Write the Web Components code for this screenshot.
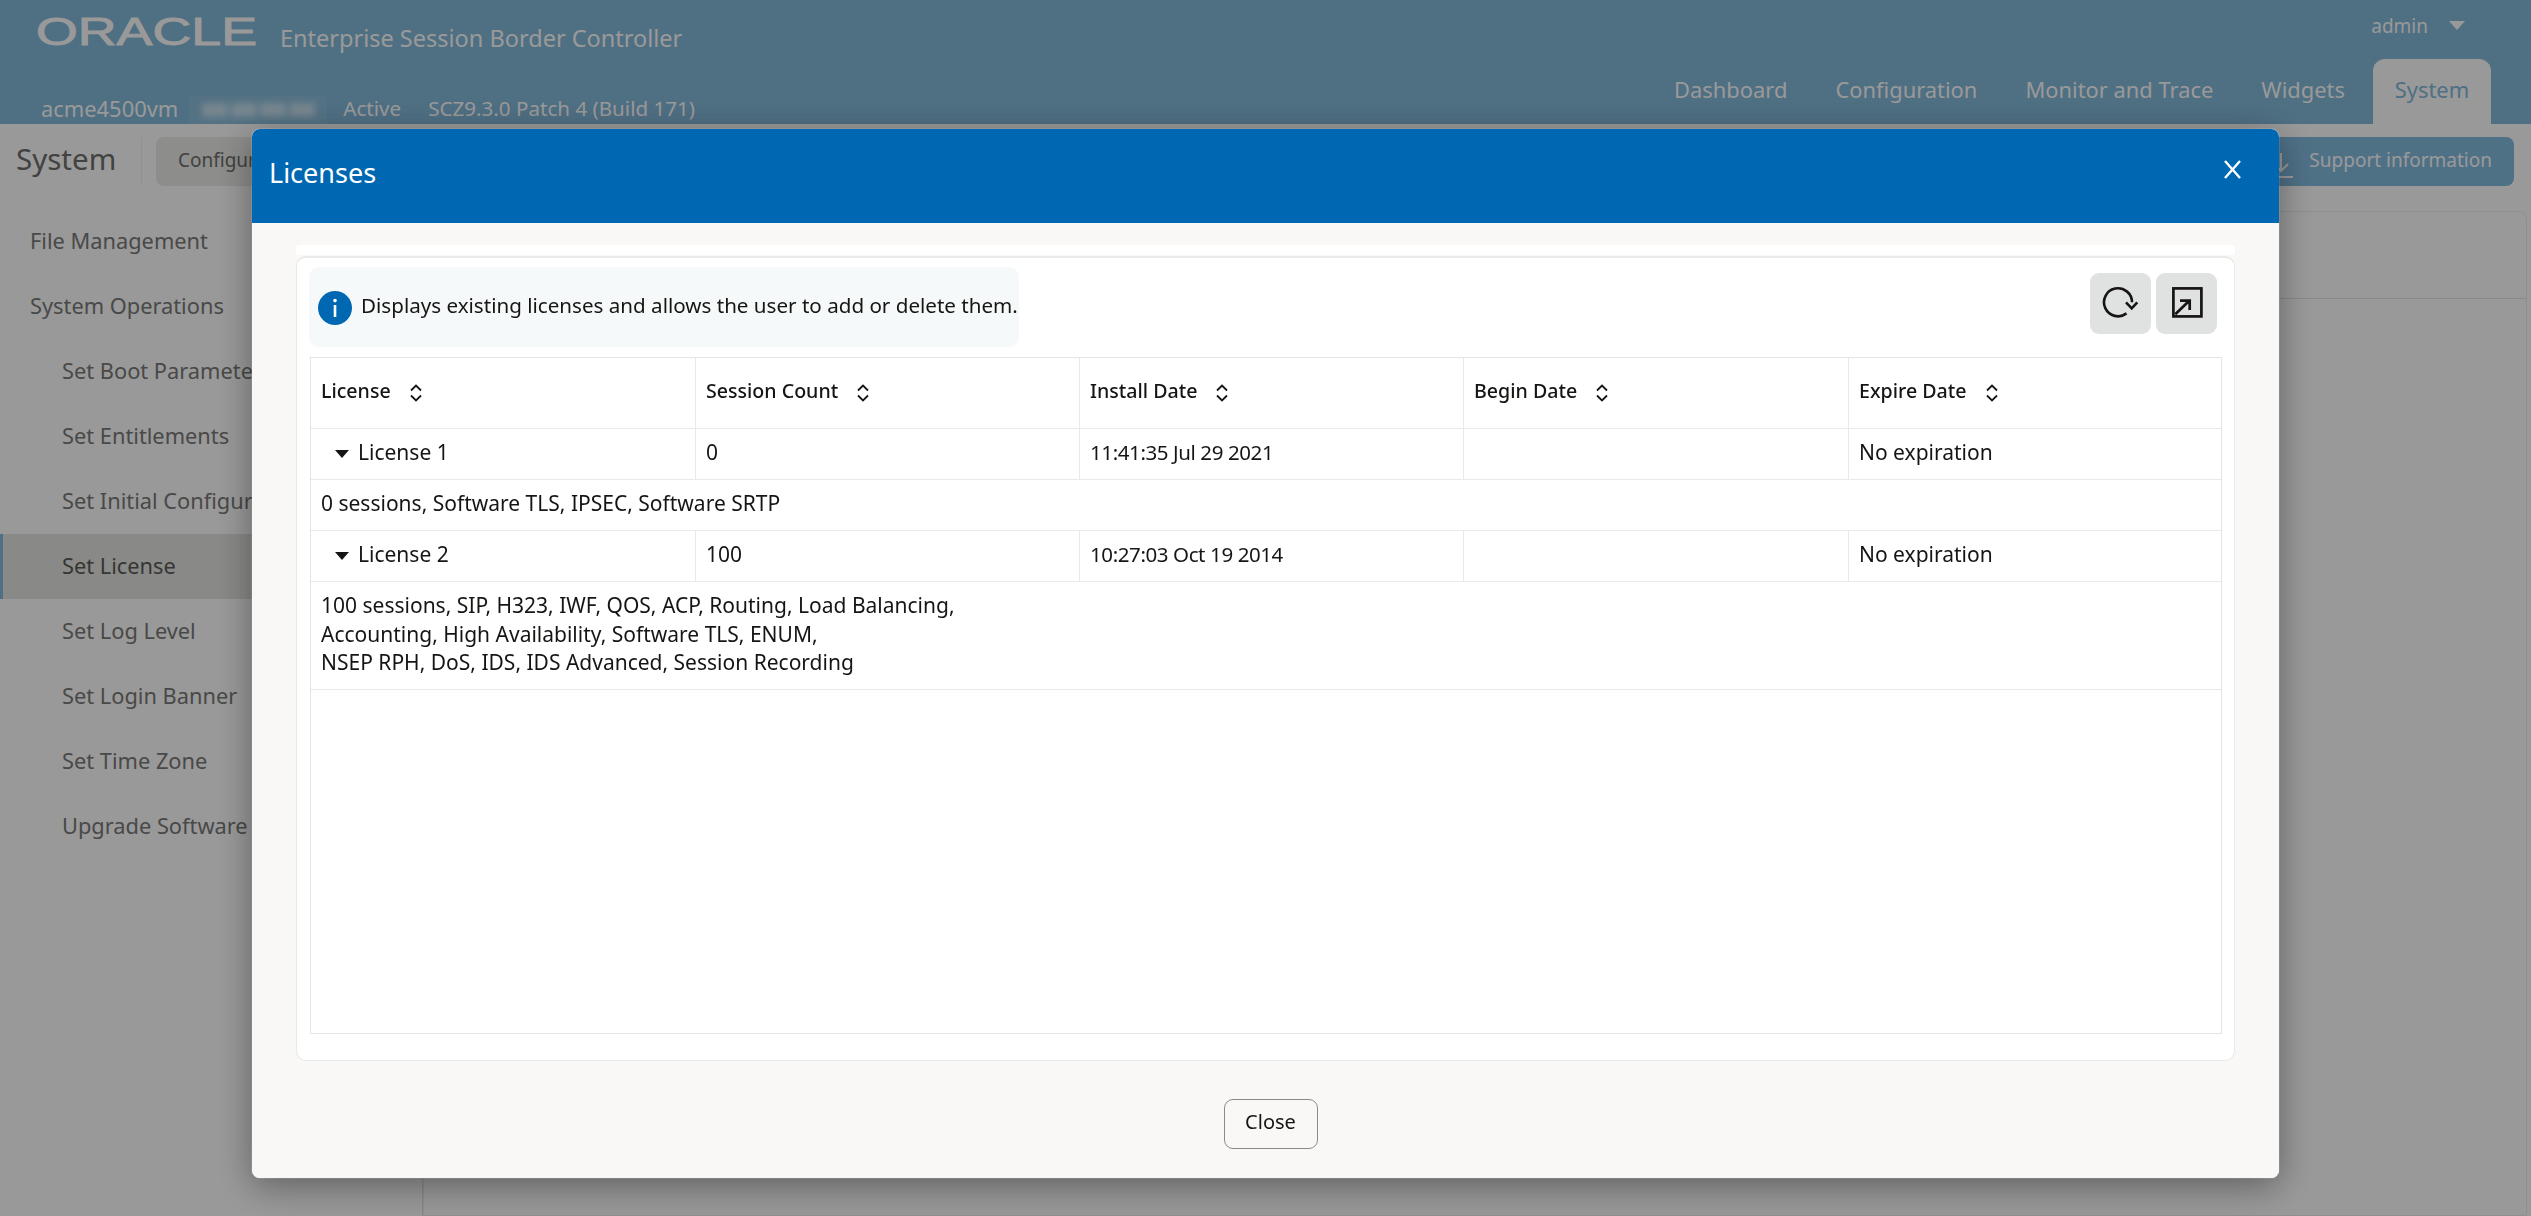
<!DOCTYPE html>
<html>
<head>
<meta charset="utf-8">
<title>Licenses</title>
<style>
  html, body { margin: 0; height: 100%; overflow: hidden; background: #fff; font-family: "Noto Sans", "Open Sans", sans-serif; }
</style>
</head>
<body>
<esbc-header></esbc-header>
<esbc-toolbar></esbc-toolbar>
<esbc-workspace></esbc-workspace>
<esbc-dialog>
  <span slot="title">Licenses</span>
  <license-panel></license-panel>
  <outline-button slot="footer">Close</outline-button>
</esbc-dialog>

<script>
// page header with logo, device info and main tabs
class EsbcHeader extends HTMLElement {
    constructor() {
        super();
        this.attachShadow({mode: "open"});
        this.shadowRoot.innerHTML = `
            <style>
                :host { display: flex; justify-content: space-between; height: 124px; background: #84b9da; color: #fff; font-size: 21.9px; }
                .left { padding: 16px 0 0 36px; display: flex; flex-direction: column; }
                .brand { display: flex; gap: 23px; height: 80px; }
                .brand svg { display: block; width: 221px; height: 32px; overflow: visible; }
                .brand svg text { font: 400 38px "Liberation Sans", sans-serif; fill: #fff; stroke: #fff; stroke-width: .9px; }
                .product { font-size: 23.5px; line-height: 44px; }
                .device { display: flex; align-items: center; height: 28px; margin-left: 5px; padding-bottom: 4px; box-sizing: border-box; }
                .ip { display: flex; gap: 3px; justify-content: center; align-items: center; width: 138px; height: 28px; margin: 4px 16px 0 11px; background: #8bbedc; }
                .ip i { display: block; width: 26px; height: 14px; background: #fff; opacity: .5; filter: blur(3px); }
                .active, .version { font-size: 20.6px; }
                .version { margin-left: 27px; }
                .right { display: flex; flex-direction: column; align-items: flex-end; padding-right: 40px; }
                .user { display: flex; align-items: center; gap: 21px; height: 59px; padding: 0 26px 8px 0; box-sizing: border-box; font-size: 19px; }
                .user b { width: 0; height: 0; border: 8px solid transparent; border-top: 9px solid #fff; border-bottom: 0; }
                nav { display: flex; height: 65px; align-items: stretch; }
                nav a { display: flex; align-items: center; padding: 0 24px 5px; box-sizing: border-box; }
                nav a.on { background: #fff; color: #84b9da; border-radius: 12px 12px 0 0; width: 118px; padding: 0 0 5px; justify-content: center; margin-left: 4px; }
            </style>
            <div class="left">
                <div class="brand">
                    <svg viewBox="0 0 221 32"><text x="0" y="29" textLength="221" lengthAdjust="spacingAndGlyphs">ORACLE</text></svg>
                    <span class="product">Enterprise Session Border Controller</span>
                </div>
                <div class="device">
                    <span>acme4500vm</span>
                    <span class="ip"><i></i><i></i><i></i><i></i></span>
                    <span class="active">Active</span>
                    <span class="version">SCZ9.3.0 Patch 4 (Build 171)</span>
                </div>
            </div>
            <div class="right">
                <div class="user"><span>admin</span><b></b></div>
                <nav>
                    <a>Dashboard</a><a>Configuration</a><a>Monitor and Trace</a><a>Widgets</a><a class="on">System</a>
                </nav>
            </div>
        `;
    }
}
customElements.define('esbc-header', EsbcHeader);

// row under the header, "System" title and page actions
class EsbcToolbar extends HTMLElement {
    constructor() {
        super();
        this.attachShadow({mode: "open"});
        this.shadowRoot.innerHTML = `
            <style>
                :host { display: flex; align-items: center; height: 49px; margin-top: 13px; padding: 0 17px 0 16px; color: #6e6e6c; font-size: 19px; }
                h1 { margin: 0; font-size: 29.5px; font-weight: 400; width: 125px; border-right: 1px solid #f0f0f0; height: 49px; line-height: 43px; }
                .btn { display: flex; align-items: center; height: 49px; box-sizing: border-box; border-radius: 8px; padding: 0 22px 4px; background: #ebebe9; margin-left: 14px; white-space: nowrap; }
                .spacer { flex: 1; }
                .support { background: #84bce0; color: #fff; margin: 0; gap: 15px; }
                .support svg { width: 24px; height: 26px; margin-top: 10px; }
            </style>
            <h1>System</h1>
            <div class="btn">Configure</div>
            <div class="spacer"></div>
            <div class="btn support">
                <svg viewBox="0 0 24 26" fill="none" stroke="#fff" stroke-width="2"><path d="M11 1v18M4 12l7 7 7-7M1 25h22"/></svg>
                <span>Support information</span>
            </div>
        `;
    }
}
customElements.define('esbc-toolbar', EsbcToolbar);

// sidebar entry, nested and active are set by attribute
class NavItem extends HTMLElement {
    constructor() {
        super();
        this.attachShadow({mode: "open"});
        this.shadowRoot.innerHTML = `
            <style>
                :host { display: flex; align-items: center; height: 65px; padding: 0 0 3px 30px; box-sizing: border-box; color: #7a7a78; font-size: 21.8px; white-space: nowrap; }
                :host([nested]) { padding-left: 62px; }
                :host([active]) { padding-left: 59px; border-left: 3px solid #84b9da; background: #e4e4e2; color: #5a5a58; }
            </style>
            <slot></slot>
        `;
    }
}
customElements.define('nav-item', NavItem);

// everything below the toolbar, behind the dialog
class EsbcWorkspace extends HTMLElement {
    constructor() {
        super();
        this.attachShadow({mode: "open"});
        this.shadowRoot.innerHTML = `
            <style>
                :host { display: flex; height: 1030px; }
                .side { width: 423px; box-sizing: border-box; padding-top: 23px; border-right: 1px solid #e4e4e2; }
                .main { flex: 1; padding: 25px 4px 0 0; }
                .panel { height: 100%; box-sizing: border-box; border: 1px solid #efefed; border-radius: 8px 8px 0 0; }
                .line { height: 86px; border-bottom: 1px solid #e4e4e2; }
            </style>
            <div class="side">
                <nav-item>File Management</nav-item>
                <nav-item>System Operations</nav-item>
                <nav-item nested>Set Boot Parameters</nav-item>
                <nav-item nested>Set Entitlements</nav-item>
                <nav-item nested>Set Initial Configuration</nav-item>
                <nav-item nested active>Set License</nav-item>
                <nav-item nested>Set Log Level</nav-item>
                <nav-item nested>Set Login Banner</nav-item>
                <nav-item nested>Set Time Zone</nav-item>
                <nav-item nested>Upgrade Software</nav-item>
            </div>
            <div class="main"><div class="panel"><div class="line"></div></div></div>
        `;
    }
}
customElements.define('esbc-workspace', EsbcWorkspace);

// modal with backdrop, title bar, body and footer
class EsbcDialog extends HTMLElement {
    constructor() {
        super();
        this.attachShadow({mode: "open"});
        this.shadowRoot.innerHTML = `
            <style>
                :host { position: fixed; inset: 0; display: block; background: rgba(0,0,0,.4); }
                .box { position: absolute; left: 252px; top: 129px; width: 2027px; height: 1049px; display: flex; flex-direction: column; border-radius: 8px; overflow: hidden; background: #f9f8f6; box-shadow: 0 0 1px #fff; }
                .shadow { position: absolute; left: 252px; top: 129px; width: 2027px; height: 1049px; border-radius: 8px; box-shadow: 0 8px 36px rgba(0,0,0,.38); }
                .head { display: flex; align-items: center; justify-content: space-between; height: 94px; flex: none; padding: 0 37px 8px 17px; box-sizing: border-box; background: #0067b2; color: #fff; font-size: 27px; }
                .head svg { width: 19px; height: 19px; display: block; margin-bottom: 6px; }
                .body { height: 827px; flex: none; padding: 22px 44px 0; box-sizing: border-box; }
                .foot { flex: 1; display: flex; justify-content: center; padding: 49px 0 0 10px; box-sizing: border-box; }
            </style>
            <div class="shadow"></div>
            <div class="box">
                <div class="head">
                    <slot name="title"></slot>
                    <svg viewBox="0 0 19 19" fill="none" stroke="#fff" stroke-width="2.4"><path d="M2 1l15 17M17 1L2 18"/></svg>
                </div>
                <div class="body"><slot></slot></div>
                <div class="foot"><slot name="footer"></slot></div>
            </div>
        `;
    }
}
customElements.define('esbc-dialog', EsbcDialog);

class OutlineButton extends HTMLElement {
    constructor() {
        super();
        this.attachShadow({mode: "open"});
        this.shadowRoot.innerHTML = `
            <style>
                :host { display: flex; align-items: center; justify-content: center; width: 94px; height: 50px; box-sizing: border-box; padding-bottom: 5px; border: 1px solid #8a8a88; border-radius: 9px; color: #161513; font-size: 20px; }
            </style>
            <slot></slot>
        `;
    }
}
customElements.define('outline-button', OutlineButton);

// square grey toolbar button, icon goes in the slot
class IconButton extends HTMLElement {
    constructor() {
        super();
        this.attachShadow({mode: "open"});
        this.shadowRoot.innerHTML = `
            <style>
                :host { display: flex; align-items: center; justify-content: center; width: 61px; height: 61px; border-radius: 9px; background: #e0e2e2; }
            </style>
            <slot></slot>
        `;
    }
}
customElements.define('icon-button', IconButton);

// white card with the info note, the two actions and the table
class LicensePanel extends HTMLElement {
    constructor() {
        super();
        this.attachShadow({mode: "open"});
        this.shadowRoot.innerHTML = `
            <style>
                :host { display: block; color: #161513; font-size: 20.6px; }
                .strip { height: 10px; background: #fff; border-radius: 4px 4px 0 0; }
                .card { height: 805px; margin-top: 1px; box-sizing: border-box; padding: 9px 12px 0 12px; background: #fff; border: 1px solid #e9e9e7; border-top-width: 2px; border-radius: 10px; }
                .top { display: flex; justify-content: space-between; height: 90px; }
                .info { display: flex; align-items: center; gap: 9px; width: 710px; height: 80px; box-sizing: border-box; padding: 0 0 5px 9px; background: #f6f9fa; border-radius: 10px; white-space: nowrap; }
                .info svg { width: 34px; height: 34px; margin-top: 7px; flex: none; }
                .actions { display: flex; gap: 5px; padding: 6px 5px 0 0; }
                icon-button svg { width: 40px; height: 40px; display: block; }
                license-table { margin-left: 1px; }
            </style>
            <div class="strip"></div>
            <div class="card">
                <div class="top">
                    <div class="info">
                        <svg viewBox="0 0 34 34"><circle cx="17" cy="17" r="17" fill="#0067b2"/><rect x="15.7" y="14" width="2.6" height="12" fill="#fff"/><circle cx="17" cy="9.6" r="1.8" fill="#fff"/></svg>
                        <span>Displays existing licenses and allows the user to add or delete them.</span>
                    </div>
                    <div class="actions">
                        <icon-button>
                            <svg viewBox="0 0 40 40" fill="none" stroke="#161513" stroke-width="2.6"><path d="M31 18.3A14 14 0 1 0 25.5 29.4"/><path d="M25 18.3l5.7 6 5.6-6"/></svg>
                        </icon-button>
                        <icon-button>
                            <svg viewBox="0 0 40 40" fill="none" stroke="#161513" stroke-width="2.7"><rect x="6.4" y="4.4" width="28" height="28"/><path d="M8.3 30.3L22 17M13 16.7h9.7V26"/></svg>
                        </icon-button>
                    </div>
                </div>
                <license-table></license-table>
            </div>
        `;
    }
}
customElements.define('license-panel', LicensePanel);

class LicenseTable extends HTMLElement {
    constructor() {
        super();
        this._columns = ["License", "Session Count", "Install Date", "Begin Date", "Expire Date"];
        this._rows = [
            { cells: ["License 1", "0", "11:41:35 Jul 29 2021", "", "No expiration"],
              detail: ["0 sessions, Software TLS, IPSEC, Software SRTP"] },
            { cells: ["License 2", "100", "10:27:03 Oct 19 2014", "", "No expiration"],
              detail: ["100 sessions, SIP, H323, IWF, QOS, ACP, Routing, Load Balancing,",
                       "Accounting, High Availability, Software TLS, ENUM,",
                       "NSEP RPH, DoS, IDS, IDS Advanced, Session Recording"] }
        ];
        this.attachShadow({mode: "open"});
        const sortIcon = `<svg class="sort" viewBox="0 0 14 18" fill="none" stroke="#161513" stroke-width="1.8"><path d="M2 6.5l5-5 5 5M2 11.5l5 5 5-5"/></svg>`;
        const head = this._columns.map(c => `<div class="th">${c}${sortIcon}</div>`).join("");
        const rows = this._rows.map(r => {
            const cells = r.cells.map((c, i) => {
                if (i == 0) return `<div class="td first"><b></b>${c}</div>`;
                if (i == 2) return `<div class="td date">${c}</div>`;
                return `<div class="td">${c}</div>`;
            }).join("");
            return cells + `<div class="detail">${r.detail.join("<br>")}</div>`;
        }).join("");
        this.shadowRoot.innerHTML = `
            <style>
                :host { display: block; height: 677px; box-sizing: border-box; border: 1px solid #e4e4e2; }
                .grid { display: grid; grid-template-columns: 384px 384px 384px 385px 1fr; font-size: 21px; }
                .th, .td { display: flex; align-items: center; padding-left: 10px; border-left: 1px solid #e9e9e7; border-bottom: 1px solid #e9e9e7; box-sizing: border-box; }
                .th:nth-child(1), .td.first { border-left: 0; }
                .th { height: 71px; font-size: 19.6px; font-weight: 500; padding-bottom: 5px; }
                .td { height: 51px; padding-bottom: 5px; }
                .date { font-size: 20.5px; letter-spacing: -.4px; }
                .first { padding-left: 24px; }
                .first b { width: 0; height: 0; margin-right: 9px; margin-top: 5px; border: 7.5px solid transparent; border-top: 8px solid #161513; border-bottom: 0; }
                .detail { grid-column: 1 / -1; padding: 9px 10px 12.5px; line-height: 28.5px; border-bottom: 1px solid #e9e9e7; }
                .sort { width: 14px; height: 18px; margin-left: 18px; margin-top: 4px; flex: none; }
            </style>
            <div class="grid">${head}${rows}</div>
        `;
    }
}
customElements.define('license-table', LicenseTable);
</script>
</body>
</html>
